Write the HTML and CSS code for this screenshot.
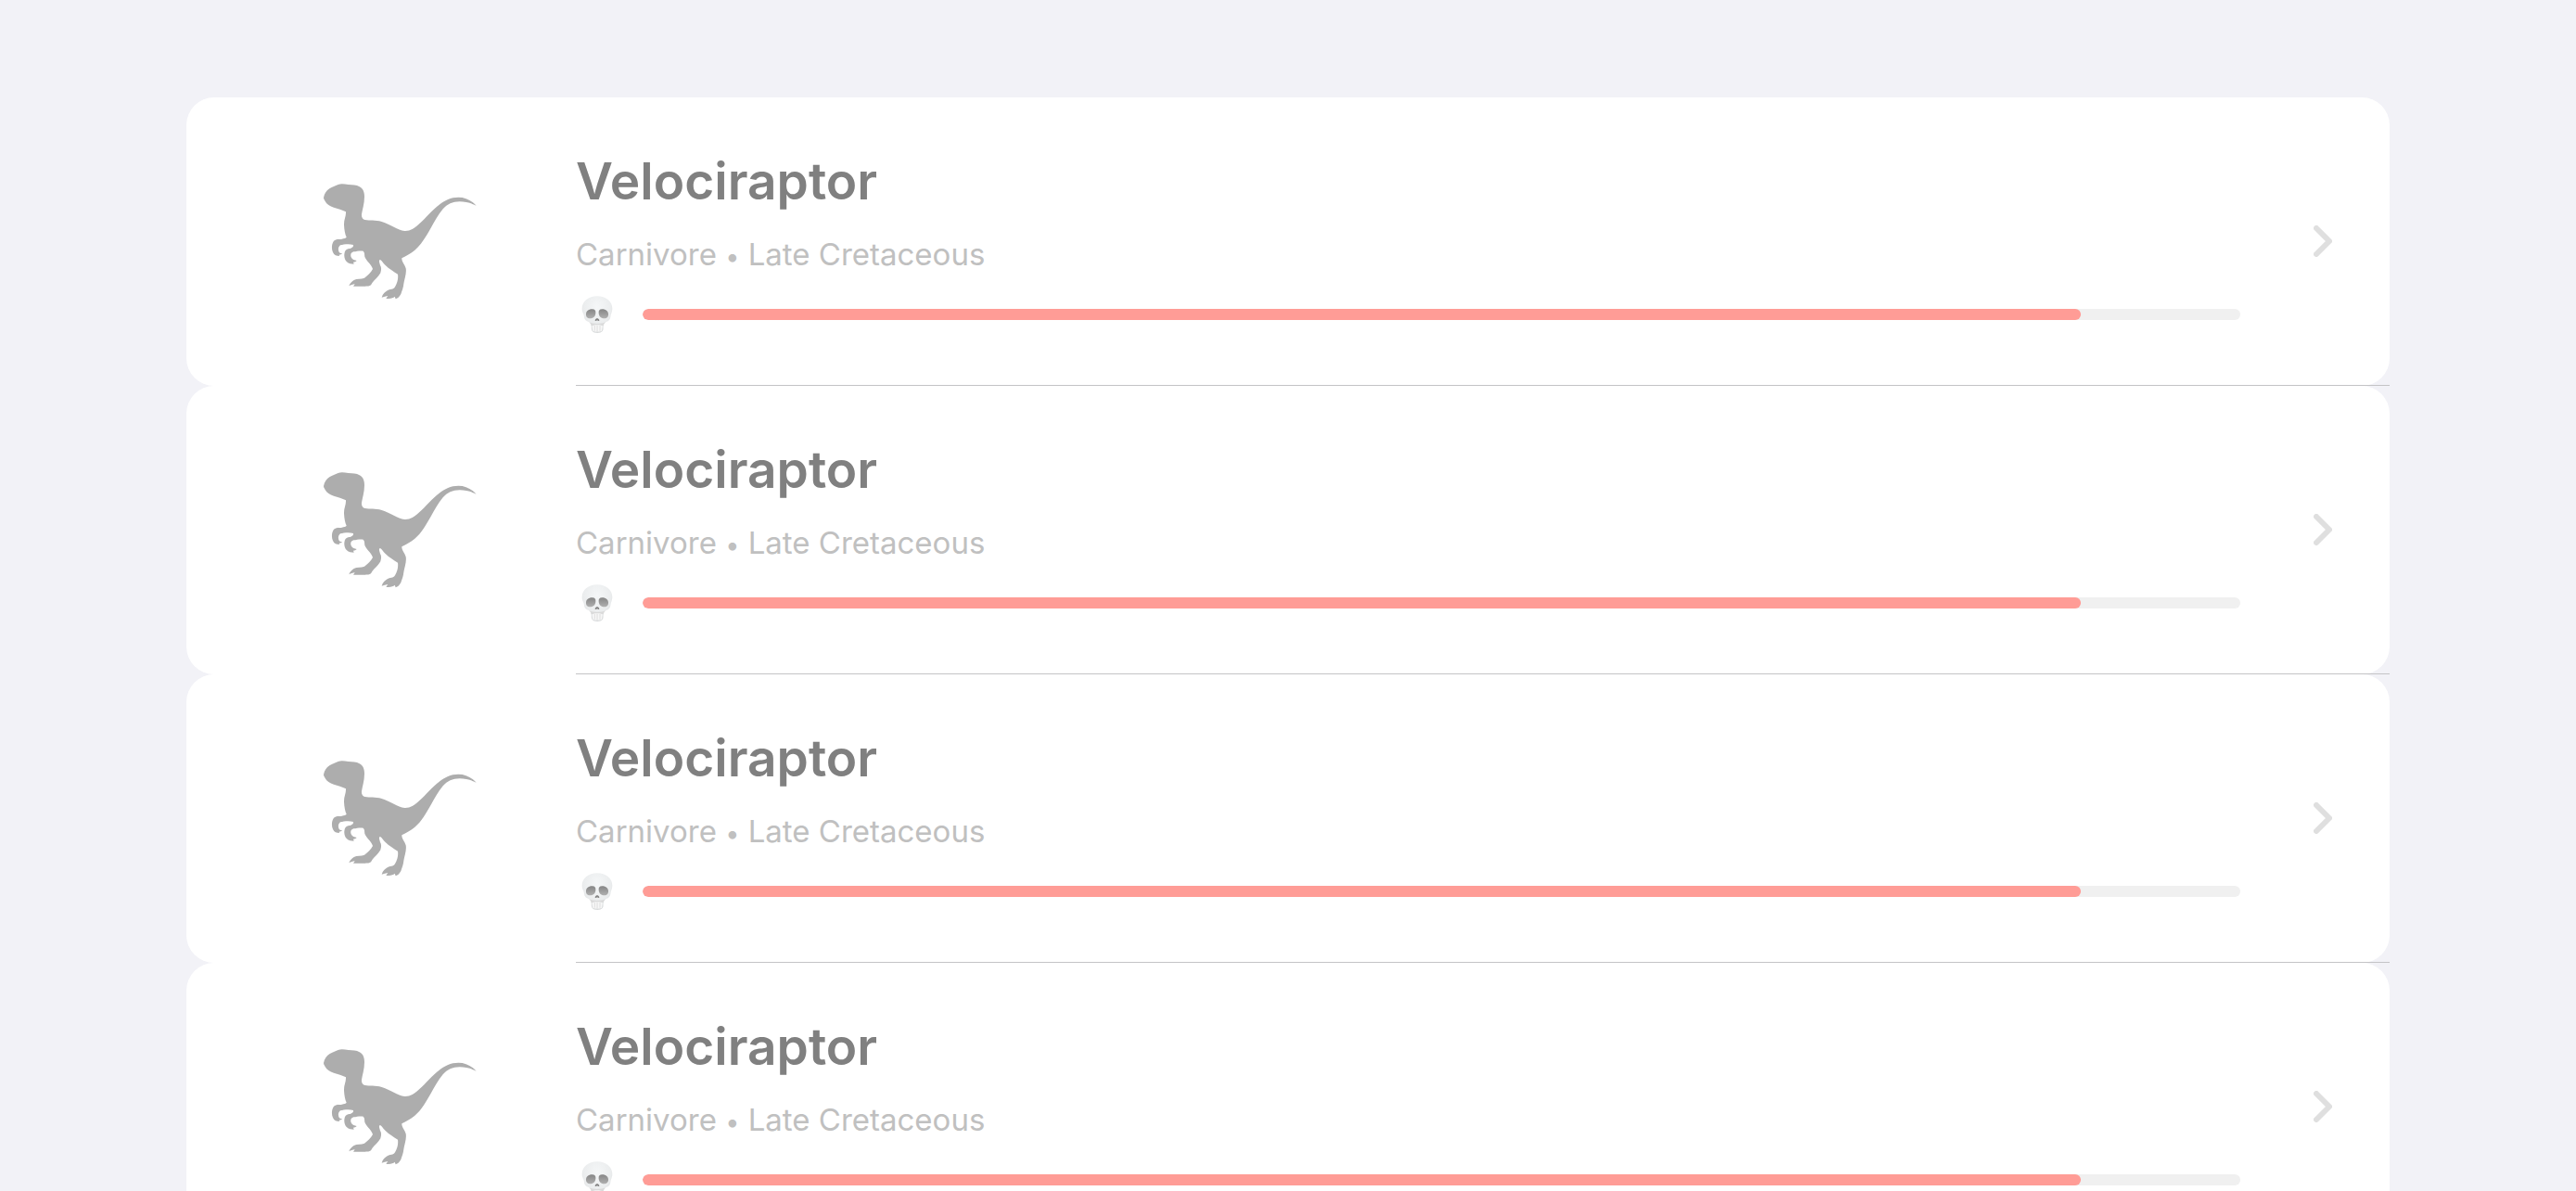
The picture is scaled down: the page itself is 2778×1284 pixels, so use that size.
FILE: index.html
```html
<!DOCTYPE html>
<html lang="en">
<head>
<meta charset="utf-8">
<meta name="viewport" content="width=device-width, initial-scale=1">
<title>Dinosaurs</title>
<link rel="stylesheet" href="styles.css">
</head>
<body>
<svg class="sprite" aria-hidden="true">
  <defs>
    <radialGradient id="bone" cx=".5" cy=".3" r=".75">
      <stop offset="0" stop-color="#f5f7f8"/>
      <stop offset=".6" stop-color="#ebedee"/>
      <stop offset="1" stop-color="#d3d5d6"/>
    </radialGradient>
    <linearGradient id="socket" x1="0" y1="0" x2="0" y2="1">
      <stop offset="0" stop-color="#868686"/>
      <stop offset="1" stop-color="#b0b0b0"/>
    </linearGradient>
    <symbol id="raptor" viewBox="0 0 600 480">
      <path d="M57 99C60 86 66 76 76 70C86 64 94 62 104 57C113 53 124 55 137 57C151 58 163 57 173 64C184 70 189 80 189 96C189 120 182 139 180 153C179 163 183 169 191 171C205 175 224 170 245 177C274 186 296 204 319 207C337 208 350 198 364 186C389 164 408 139 431 122C449 108 468 98 493 98C515 98 535 108 551 125C534 117 516 112 497 112C474 112 457 120 443 136C426 156 417 175 404 197C389 223 374 251 352 269C338 281 321 289 310 295C309 306 319 315 323 328C326 344 318 363 316 378C315 391 310 402 307 411C303 419 297 425 290 427L287 419C282 424 272 427 259 425L265 417C258 418 251 420 245 422C248 410 256 405 263 400C271 395 283 397 288 388C296 374 299 360 297 347C283 338 268 329 257 318C249 311 246 303 240 300C234 302 238 310 240 318C246 327 242 336 241 343C232 359 219 366 211 380C207 386 197 385 188 386L153 386L158 379C151 379 145 382 139 385C142 376 148 371 155 366C165 360 178 363 189 359C200 350 210 342 216 330C211 313 194 303 190 290C189 282 190 276 185 272C174 270 164 273 154 274C145 277 143 284 146 292C150 300 157 302 164 303C161 307 157 308 153 308L155 314C147 314 138 313 132 307C125 300 122 288 125 277C127 267 135 264 143 264C150 262 154 258 153 252C139 248 123 250 111 253C104 258 103 269 107 275C110 279 114 280 117 279C115 283 111 284 107 284L108 288C99 288 91 285 87 276C82 265 83 250 89 241C96 231 108 235 116 233C123 231 129 230 131 227C126 216 124 203 123 188C122 171 130 159 129 145C117 138 103 136 90 131C77 127 67 121 62 111C60 107 57 104 57 99Z" fill="#adadad"/>
    </symbol>
    <symbol id="skull" viewBox="0 0 100 120">
      <path d="M50 1C22 1 1 18 1 41C1 53 7 57 8 68C8 76 14 81 23 84C29 86 30 91 31 99C31 106 31 111 34 114C39 122 62 122 67 114C70 111 70 106 70 99C71 91 73 86 79 84C88 81 92 76 93 68C94 57 99 53 99 41C99 18 78 1 50 1Z" fill="url(#bone)"/>
      <path d="M23 85C32 88 38 90 50 90S69 88 78 85C73 89 71 92 70 97Q50 91 31 97C30 92 29 89 23 85Z" fill="#dadada"/>
      <path d="M14 58C15 48 24 43 34 43C43 43 46 48 45 56C44 67 36 73 27 73C18 73 13 67 14 58Z" fill="url(#socket)"/>
      <path d="M86 58C85 48 76 43 66 43C57 43 54 48 55 56C56 67 64 73 73 73C82 73 87 67 86 58Z" fill="url(#socket)"/>
      <path d="M50 72C46 73 43 77 43 80Q46 82 50 79Q54 82 57 80C57 77 54 73 50 72Z" fill="#868686"/>
      <path d="M34 97Q50 91 67 97L65 113Q50 118 36 113Z" fill="#f7f7f7"/>
      <path d="M42 96V113M50 95V115M59 96V113" stroke="#d3d3d3" stroke-width="2"/>
    </symbol>
    <symbol id="chevron" viewBox="0 0 20 34">
      <path d="M3 3L17 17L3 31" fill="none" stroke="#dfdfdf" stroke-width="6" stroke-linecap="round" stroke-linejoin="round"/>
    </symbol>
  </defs>
</svg>
<main class="screen">
  <ul class="list">
    <li class="item">
      <a class="row" href="#velociraptor-1">
        <svg class="raptor" aria-hidden="true"><use href="#raptor"/></svg>
        <div class="details">
          <h2 class="name">Velociraptor</h2>
          <p class="facts">Carnivore <span class="dot">•</span> Late Cretaceous</p>
          <div class="danger">
            <svg class="skull" aria-hidden="true"><use href="#skull"/></svg>
            <progress class="meter" max="100" value="90" aria-label="Danger"></progress>
          </div>
        </div>
        <svg class="chevron" aria-hidden="true"><use href="#chevron"/></svg>
      </a>
    </li>
    <li class="item">
      <a class="row" href="#velociraptor-2">
        <svg class="raptor" aria-hidden="true"><use href="#raptor"/></svg>
        <div class="details">
          <h2 class="name">Velociraptor</h2>
          <p class="facts">Carnivore <span class="dot">•</span> Late Cretaceous</p>
          <div class="danger">
            <svg class="skull" aria-hidden="true"><use href="#skull"/></svg>
            <progress class="meter" max="100" value="90" aria-label="Danger"></progress>
          </div>
        </div>
        <svg class="chevron" aria-hidden="true"><use href="#chevron"/></svg>
      </a>
    </li>
    <li class="item">
      <a class="row" href="#velociraptor-3">
        <svg class="raptor" aria-hidden="true"><use href="#raptor"/></svg>
        <div class="details">
          <h2 class="name">Velociraptor</h2>
          <p class="facts">Carnivore <span class="dot">•</span> Late Cretaceous</p>
          <div class="danger">
            <svg class="skull" aria-hidden="true"><use href="#skull"/></svg>
            <progress class="meter" max="100" value="90" aria-label="Danger"></progress>
          </div>
        </div>
        <svg class="chevron" aria-hidden="true"><use href="#chevron"/></svg>
      </a>
    </li>
    <li class="item">
      <a class="row" href="#velociraptor-4">
        <svg class="raptor" aria-hidden="true"><use href="#raptor"/></svg>
        <div class="details">
          <h2 class="name">Velociraptor</h2>
          <p class="facts">Carnivore <span class="dot">•</span> Late Cretaceous</p>
          <div class="danger">
            <svg class="skull" aria-hidden="true"><use href="#skull"/></svg>
            <progress class="meter" max="100" value="90" aria-label="Danger"></progress>
          </div>
        </div>
        <svg class="chevron" aria-hidden="true"><use href="#chevron"/></svg>
      </a>
    </li>
  </ul>
</main>
</body>
</html>
```
FILE: styles.css
```css
* { box-sizing: border-box; }

body {
  margin: 0;
  background: #f2f2f7;
  font-family: Inter, "Liberation Sans", sans-serif;
}

.sprite { position: absolute; width: 0; height: 0; }

.screen {
  height: 100vh;
  overflow-y: auto;
  scrollbar-width: none;
  padding: 105px 201px;
}

.list { margin: 0; padding: 0; list-style: none; }

.item { position: relative; }

/* hairline under each row, starting at the text column */
.item::after {
  content: "";
  position: absolute;
  left: 420px;
  right: 0;
  bottom: 0;
  height: 1px;
  background: #c4c4c6;
}

.row {
  display: flex;
  align-items: center;
  padding: 56px 62px 57px 129px;
  border-radius: 30px;
  background: #fff;
  color: inherit;
  text-decoration: none;
}

.raptor { flex: none; width: 200px; height: 160px; margin-right: 91px; }

.details {
  flex: 1;
  min-width: 0;
  display: flex;
  flex-direction: column;
  gap: 25px;
}

.name {
  margin: 0;
  font-size: 55px;
  line-height: 68px;
  font-weight: 600;
  color: #808080;
}

.facts {
  margin: 0;
  font-size: 33px;
  line-height: 40px;
  color: #c0c0c0;
}

.dot { font-size: 27px; line-height: 1; }

.danger { display: flex; align-items: center; }

.skull { flex: none; width: 34px; height: 40px; margin: 0 32px 0 6px; }

.meter {
  appearance: none;
  -webkit-appearance: none;
  flex: 1;
  min-width: 0;
  height: 12px;
  border: 0;
  border-radius: 6px;
  overflow: hidden;
  background: #f0f0f0;
}

.meter::-webkit-progress-bar { background: #f0f0f0; }

.meter::-webkit-progress-value { background: #ff9c96; border-radius: 6px; }

.meter::-moz-progress-bar { background: #ff9c96; border-radius: 6px; }

.chevron { flex: none; width: 20px; height: 34px; margin-left: 79px; }
```
